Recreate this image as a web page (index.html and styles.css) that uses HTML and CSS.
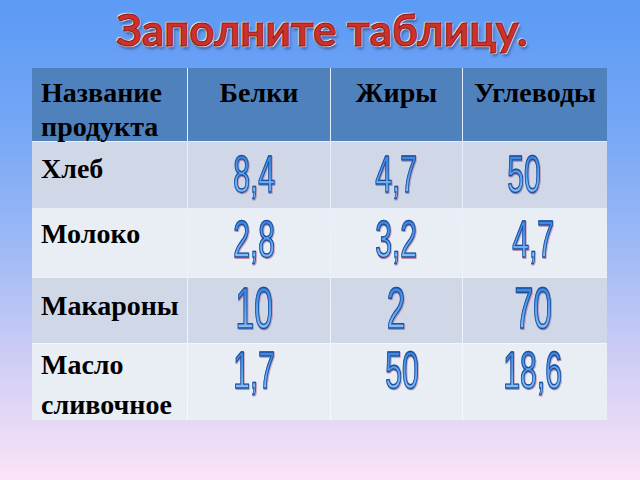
FILE: index.html
```html
<!DOCTYPE html>
<html lang="ru">
<head>
<meta charset="utf-8">
<link rel="stylesheet" href="styles.css">
</head>
<body>
<div class="slide">
  <h1 class="title">Заполните таблицу.</h1>
  <div class="grid">
    <div class="row head">
      <div class="cell name">Название продукта</div>
      <div class="cell">Белки</div>
      <div class="cell">Жиры</div>
      <div class="cell">Углеводы</div>
    </div>
    <div class="row r1 odd">
      <div class="cell name">Хлеб</div>
      <div class="cell c2"><span class="num">8,4</span></div>
      <div class="cell c3"><span class="num">4,7</span></div>
      <div class="cell c4 a"><span class="num">50</span></div>
    </div>
    <div class="row r2 even">
      <div class="cell name">Молоко</div>
      <div class="cell c2"><span class="num">2,8</span></div>
      <div class="cell c3"><span class="num">3,2</span></div>
      <div class="cell c4"><span class="num">4,7</span></div>
    </div>
    <div class="row r3 odd">
      <div class="cell name">Макароны</div>
      <div class="cell c2"><span class="num">10</span></div>
      <div class="cell c3"><span class="num">2</span></div>
      <div class="cell c4"><span class="num">70</span></div>
    </div>
    <div class="row r4 even">
      <div class="cell name">Масло сливочное</div>
      <div class="cell c2"><span class="num">1,7</span></div>
      <div class="cell c3 b"><span class="num">50</span></div>
      <div class="cell c4"><span class="num">18,6</span></div>
    </div>
  </div>
</div>
</body>
</html>
```
FILE: styles.css
```css
html, body {
  margin: 0;
  padding: 0;
}
body {
  width: 640px;
  height: 480px;
  overflow: hidden;
  background: linear-gradient(180deg, #5b9af5 0%, #74a6f6 25%, #9bb8f5 50%, #cfcdf5 75%, #fbe4f8 100%);
}
.slide {
  display: flex;
  flex-direction: column;
  align-items: flex-start;
  padding-left: 32px;
}
.title {
  align-self: stretch;
  margin: 0 0 0 -32px;
  height: 68px;
  text-align: center;
  font-family: Lato, "Open Sans", sans-serif;
  font-weight: 700;
  font-size: 44px;
  line-height: 58px;
  padding-left: 4px;
  color: #cc322d;
  -webkit-text-stroke: 1px #8e1a18;
  text-shadow: 0 0 2px #fff, 1px 1px 1px #fff, -1px -1px 1px #fff, 2px 3px 3px rgba(40, 40, 80, 0.55);
}
.grid {
  display: grid;
  grid-template-columns: 155px 142px 131px 144px;
  grid-template-rows: 73px 66px 68px 65px 76px;
  gap: 1px;
  width: 575px;
  background: rgba(255, 255, 255, 0.8);
  font-family: "Liberation Serif", "Times New Roman", serif;
  font-weight: 700;
  font-size: 28px;
  color: #000;
}
.row { display: contents; }
.cell {
  text-align: center;
  line-height: 36px;
  white-space: nowrap;
}
.cell.name {
  text-align: left;
  padding-left: 9px;
  white-space: normal;
}
.head .cell { background: #4f81bd; padding-top: 8px; line-height: 34px; }
.odd .cell { background: #d0d8e8; }
.even .cell { background: #e9edf4; }
.r1 .name { padding-top: 9px; }
.r2 .name { padding-top: 7px; }
.r3 .name { padding-top: 10px; }
.r4 .name { padding-top: 1px; line-height: 40px; }
.c2 { padding-right: 10px; }
.c4 { padding-right: 4px; }
.c4.a { padding-right: 22px; }
.c3.b { padding-left: 10px; }
.num {
  display: inline-block;
  font-family: "Liberation Sans", Arial, sans-serif;
  font-weight: 400;
  font-size: 52px;
  line-height: 52px;
  transform: scaleX(0.58);
  color: #4a93e6;
  background: linear-gradient(180deg, #2f7ad8 0%, #5fa6ef 55%, #9ccaf6 100%);
  -webkit-background-clip: text;
  background-clip: text;
  -webkit-text-fill-color: transparent;
  -webkit-text-stroke: 1.4px #1c4e9e;
  filter: drop-shadow(1px 1px 0 rgba(170, 90, 130, 0.7));
}
.r1 .num { margin-top: 6px; }
.r2 .num { margin-top: 4px; }
.r3 .num { margin-top: 1px; font-size: 58px; line-height: 58px; }
.r4 .num { margin-top: 0; }
```
